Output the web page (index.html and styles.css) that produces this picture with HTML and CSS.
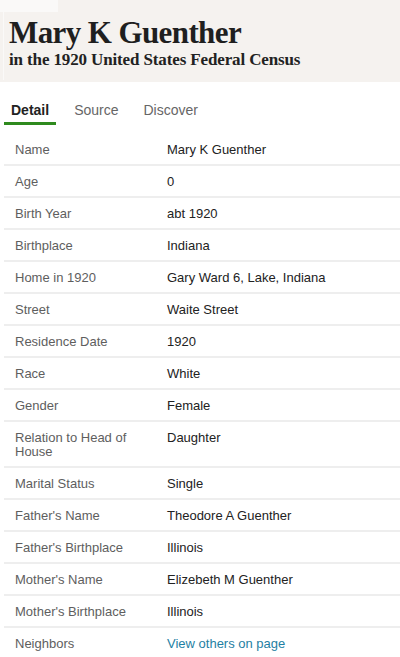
FILE: index.html
```html
<!DOCTYPE html>
<html lang="en">
<head>
<meta charset="utf-8">
<title>Mary K Guenther in the 1920 United States Federal Census</title>
<link rel="stylesheet" href="styles.css">
</head>
<body>
<header class="record-header">
  <h1 class="record-title">Mary K Guenther</h1>
  <p class="record-subtitle">in the 1920 United States Federal Census</p>
</header>
<nav class="tabs">
  <span class="tab tab-active">Detail</span>
  <span class="tab">Source</span>
  <span class="tab">Discover</span>
</nav>
<div class="facts">
  <div class="row"><div class="label">Name</div><div class="value">Mary K Guenther</div></div>
  <div class="row"><div class="label">Age</div><div class="value">0</div></div>
  <div class="row"><div class="label">Birth Year</div><div class="value">abt 1920</div></div>
  <div class="row"><div class="label">Birthplace</div><div class="value">Indiana</div></div>
  <div class="row"><div class="label">Home in 1920</div><div class="value">Gary Ward 6, Lake, Indiana</div></div>
  <div class="row"><div class="label">Street</div><div class="value">Waite Street</div></div>
  <div class="row"><div class="label">Residence Date</div><div class="value">1920</div></div>
  <div class="row"><div class="label">Race</div><div class="value">White</div></div>
  <div class="row"><div class="label">Gender</div><div class="value">Female</div></div>
  <div class="row"><div class="label">Relation to Head of House</div><div class="value">Daughter</div></div>
  <div class="row"><div class="label">Marital Status</div><div class="value">Single</div></div>
  <div class="row"><div class="label">Father's Name</div><div class="value">Theodore A Guenther</div></div>
  <div class="row"><div class="label">Father's Birthplace</div><div class="value">Illinois</div></div>
  <div class="row"><div class="label">Mother's Name</div><div class="value">Elizebeth M Guenther</div></div>
  <div class="row"><div class="label">Mother's Birthplace</div><div class="value">Illinois</div></div>
  <div class="row"><div class="label">Neighbors</div><div class="value"><a class="link" href="#">View others on page</a></div></div>
</div>
</body>
</html>
```
FILE: styles.css
```css
html, body {
  margin: 0;
  padding: 0;
  background: #ffffff;
}
body {
  font-family: "Liberation Sans", Arial, sans-serif;
  color: #222222;
  width: 400px;
  overflow: hidden;
}
.record-header {
  position: relative;
  background: #f5f2ef;
  padding: 16px 0 12px 9px;
}
.record-header::before {
  content: "";
  position: absolute;
  left: 0;
  top: 0;
  width: 58px;
  height: 12px;
  background: #faf9f8;
}
.record-header::after {
  content: "";
  position: absolute;
  left: 3px;
  top: 12px;
  width: 1px;
  height: 68px;
  background: #faf9f8;
}
.record-title {
  margin: 0;
  font-family: "Liberation Serif", "Times New Roman", serif;
  font-weight: bold;
  font-size: 31px;
  line-height: 34px;
  letter-spacing: -0.6px;
  color: #1f1f1f;
}
.record-subtitle {
  margin: 0;
  font-family: "Liberation Serif", "Times New Roman", serif;
  font-weight: bold;
  font-size: 17px;
  line-height: 20px;
  letter-spacing: -0.13px;
  color: #222222;
}
.tabs {
  display: flex;
  gap: 11px;
  margin: 20px 0 0 4px;
}
.tab {
  font-size: 14px;
  line-height: 17px;
  padding: 0 7px 3px;
  border-bottom: 3px solid transparent;
  color: #666666;
}
.tab-active {
  color: #222222;
  font-weight: bold;
  border-bottom-color: #2f8a1e;
}
.facts {
  margin: 9px 0 0 4px;
}
.row {
  display: grid;
  grid-template-columns: 163px 1fr;
  border-bottom: 2px solid #eeeeee;
  font-size: 13px;
  line-height: 14px;
}
.label {
  padding: 9px 10px 7px 11px;
  color: #5e5e5e;
}
.value {
  padding: 9px 10px 7px 0;
  color: #222222;
}
.link {
  color: #1f7fa3;
  text-decoration: none;
}
```
